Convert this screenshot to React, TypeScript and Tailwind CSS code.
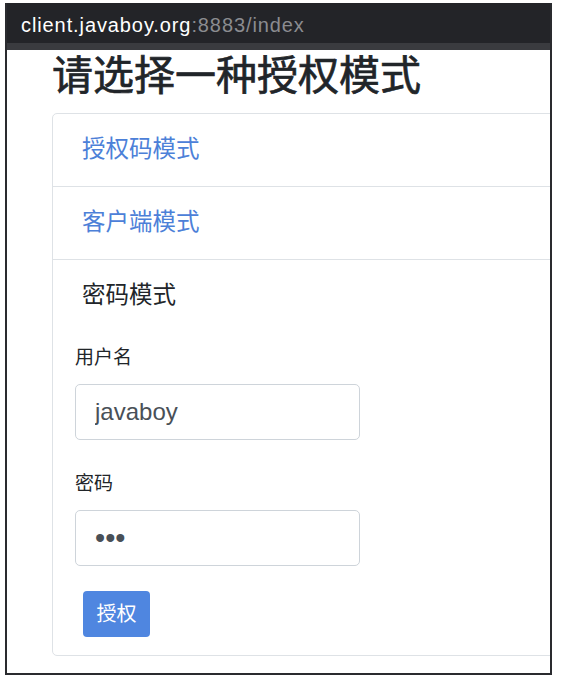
import React from "react";

const cjk = { fontFamily: '"Liberation Sans", "Noto Sans CJK SC", sans-serif' };

export default function App() {
  return (
    <div className="w-[566px] h-[687px] bg-white overflow-hidden pt-[3px] pl-[5px]" style={cjk}>
      <div className="w-[547px] h-[672px] border-2 border-t-0 border-[#2a2b2f] overflow-hidden flex flex-col bg-white">
        {/* Title bar */}
        <div className="h-[47px] shrink-0 bg-[#232428] flex flex-col">
          <div className="flex-1 pl-[14px] pt-[10px] text-[20px] leading-[24px] tracking-[0.9px] whitespace-nowrap">
            <span className="text-white">client.javaboy.org</span>
            <span className="text-[#8b8c90]">:8883/index</span>
          </div>
          <div className="h-[7px] bg-[#3a3b3f]" />
        </div>

        {/* Heading */}
        <h3 className="mt-[2px] mb-[13px] ml-[45px] text-[41px] leading-[48px] font-normal text-[#212529] [-webkit-text-stroke:0.7px_#212529] whitespace-nowrap">
          请选择一种授权模式
        </h3>

        {/* Card */}
        <div className="ml-[45px] w-[520px] shrink-0 border border-[#dee2e6] rounded-[5px] flex flex-col">
          <div className="pl-[29px] pt-[18px] pb-[19px] text-[23.5px] leading-[35px] text-[#4c80d8] border-b border-[#dee2e6]">
            授权码模式
          </div>
          <div className="pl-[29px] pt-[18px] pb-[19px] text-[23.5px] leading-[35px] text-[#4c80d8] border-b border-[#dee2e6]">
            客户端模式
          </div>
          <div className="flex flex-col pb-[18px]">
            <div className="pl-[29px] pt-[18px] text-[23.5px] leading-[35px] text-[#212529]">密码模式</div>
            <form className="flex flex-col pl-[22px] pt-[31px]">
              <label className="text-[19px] leading-[28px] text-[#212529]">用户名</label>
              <input
                readOnly
                value="javaboy"
                className="mt-[12px] w-[285px] h-[56px] border border-[#ced4da] rounded-[5px] px-[19px] text-[24px] text-[#495057] outline-none"
                style={{ fontFamily: '"Liberation Sans", sans-serif' }}
              />
              <label className="mt-[30px] text-[19px] leading-[28px] text-[#212529]">密码</label>
              <input
                readOnly
                type="password"
                value="123"
                className="mt-[12px] w-[285px] h-[56px] border border-[#ced4da] rounded-[5px] px-[19px] text-[29px] tracking-[0px] text-[#495057] outline-none"
                style={{ fontFamily: '"Liberation Sans", sans-serif' }}
              />
              <button
                type="button"
                className="mt-[25px] ml-[8px] w-[67px] h-[46px] rounded-[4px] bg-[#4f86e0] text-white text-[20px] leading-[30px] flex items-center justify-center"
              >
                授权
              </button>
            </form>
          </div>
        </div>
      </div>
    </div>
  );
}
